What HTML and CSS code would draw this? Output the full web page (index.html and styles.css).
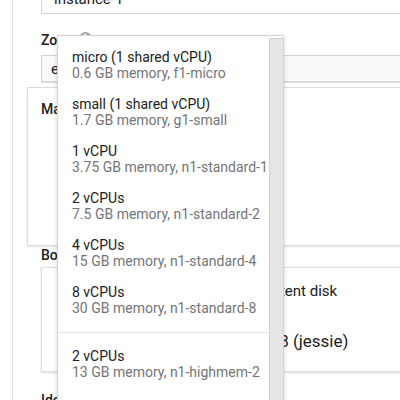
FILE: index.html
```html
<!DOCTYPE html>
<html>
<head>
<meta charset="utf-8">
<link rel="stylesheet" href="styles.css">
</head>
<body>
<div class="page">
  <div class="frame">
    <div class="form">
      <div class="input name-input">instance-1</div>
      <div class="label zone-label">Zone <span class="help">?</span></div>
      <div class="input select">europe-west1-d</div>
      <div class="card machine">
        <div class="label">Machine type</div>
      </div>
      <div class="label boot-label">Boot disk</div>
      <div class="boot-box">
        <div class="boot-line1">New 10 GB standard persistent disk</div>
        <div class="boot-line2">Debian GNU/Linux 8 (jessie)</div>
      </div>
      <div class="label ident-label">Identity and API access</div>
    </div>
  </div>
  <div class="dropdown">
    <div class="scrollbar"></div>
    <ul class="menu">
      <li class="item"><div class="title">micro (1 shared vCPU)</div><div class="sub">0.6 GB memory, f1-micro</div></li>
      <li class="item"><div class="title">small (1 shared vCPU)</div><div class="sub">1.7 GB memory, g1-small</div></li>
      <li class="item"><div class="title">1 vCPU</div><div class="sub">3.75 GB memory, n1-standard-1</div></li>
      <li class="item"><div class="title">2 vCPUs</div><div class="sub">7.5 GB memory, n1-standard-2</div></li>
      <li class="item"><div class="title">4 vCPUs</div><div class="sub">15 GB memory, n1-standard-4</div></li>
      <li class="item"><div class="title">8 vCPUs</div><div class="sub">30 GB memory, n1-standard-8</div></li>
      <li class="divider"></li>
      <li class="item"><div class="title">2 vCPUs</div><div class="sub">13 GB memory, n1-highmem-2</div></li>
    </ul>
  </div>
</div>
</body>
</html>
```

FILE: styles.css
```css
* { box-sizing: border-box; }
html, body {
  margin: 0;
  padding: 0;
  background: #fff;
}
body {
  font-family: Roboto, "Liberation Sans", sans-serif;
  color: #212121;
  overflow: hidden;
}
.page {
  position: relative;
  width: 400px;
  height: 400px;
  overflow: hidden;
}
.frame {
  margin-left: 12px;
  border-left: 1px solid #e2e2e2;
  height: 400px;
  padding-left: 14px;
  overflow: hidden;
}
.form {
  display: flex;
  flex-direction: column;
  align-items: stretch;
}
.input {
  border: 1px solid #d6d6d6;
  font-size: 15px;
  white-space: nowrap;
  display: flex;
  align-items: center;
  padding-left: 9px;
  margin-left: 14px;
  margin-right: -20px;
}
.name-input {
  margin-top: -16px;
  height: 30px;
  padding-left: 12px;
}
.label {
  font-size: 14px;
  font-weight: 500;
  line-height: 16px;
  white-space: nowrap;
  color: #212121;
}
.zone-label {
  margin-top: 18px;
  margin-left: 14px;
  display: flex;
  align-items: center;
  gap: 6px;
}
.help {
  display: inline-block;
  width: 13px;
  height: 13px;
  border-radius: 50%;
  background: #a8a8a8;
  color: #fff;
  font-size: 10px;
  line-height: 13px;
  text-align: center;
  position: relative;
  top: -2px;
  left: 0;
}
.select {
  margin-top: 7px;
  height: 28px;
  background: #f9f9f9;
  border-color: #d3d3d3;
  border-bottom: 2px solid #d9d9d9;
}
.card {
  margin-top: 4px;
  height: 159px;
  border: 1px solid #dcdcdc;
  box-shadow: 0 1px 2px rgba(0,0,0,0.12);
  margin-right: -20px;
  padding: 13px 0 0 13px;
}
.boot-label {
  margin-top: 1px;
  margin-left: 14px;
}
.boot-box {
  margin-top: 4px;
  margin-left: 14px;
  margin-right: -20px;
  height: 105px;
  border: 1px solid #e0e0e0;
  box-shadow: 0 1px 2px rgba(0,0,0,0.14);
  padding-top: 14px;
  white-space: nowrap;
}
.boot-line1 {
  font-size: 15px;
  line-height: 18px;
  padding-left: 57px;
}
.boot-line2 {
  font-size: 17px;
  line-height: 20px;
  margin-top: 31px;
  padding-left: 94px;
}
.ident-label {
  margin-top: 20px;
  margin-left: 14px;
}
.dropdown {
  position: absolute;
  left: 57px;
  top: 35px;
  width: 227px;
  height: 380px;
  background: #fff;
  border: 1px solid #d4d4d4;
  box-shadow: 0 2px 5px rgba(0,0,0,0.16);
  overflow: hidden;
}
.scrollbar {
  position: absolute;
  right: 0;
  top: 2px;
  bottom: 0;
  width: 14px;
  background: #e5e5e5;
  border-left: 1px solid #d2d2d2;
  border-top: 1px solid #d2d2d2;
}
.menu {
  list-style: none;
  margin: 0;
  padding: 6px 14px 0 0;
}
.item {
  padding: 7px 0 8px 14px;
  white-space: nowrap;
  font-size: 14px;
  line-height: 16px;
}
.title {
  color: #212121;
}
.sub {
  color: #757575;
}
.divider {
  height: 1px;
  margin: 8px 0;
  background: #e3e3e3;
}
```
